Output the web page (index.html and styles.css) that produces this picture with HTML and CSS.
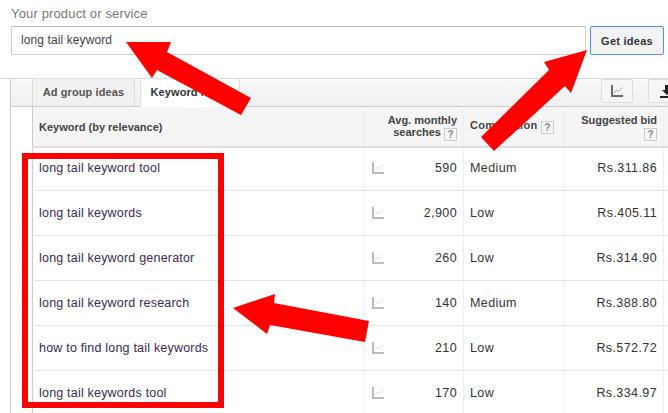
FILE: index.html
```html
<!DOCTYPE html>
<html lang="en">
<head>
    <meta charset="UTF-8">
    <meta name="viewport" content="width=device-width, initial-scale=1.0">
    <title>Keyword ideas</title>
    <link rel="stylesheet" href="styles.css">
</head>
<body>
    <svg width="0" height="0" class="defs">
        <symbol id="trend" viewBox="0 0 12 12">
            <path d="M1 0v11H12" fill="none" stroke="currentColor" stroke-width="2"/>
            <path d="M3 8l2.500-3 2 1.500 3.500-4" fill="none" stroke="currentColor" stroke-width=".9" opacity=".6"/>
        </symbol>
    </svg>

    <div class="search">
        <div class="search-label">Your product or service</div>
        <div class="search-row">
            <div class="search-input">long tail keyword</div>
            <button class="btn-ideas">Get ideas</button>
        </div>
    </div>

    <div class="results">
        <div class="results-body">
            <div class="toolbar">
                <div class="tab">Ad group ideas</div>
                <div class="tab tab-active">Keyword ideas</div>
                <div class="tool tool-chart"><svg width="12" height="12"><use href="#trend"/></svg></div>
                <div class="tool tool-download">
                    <svg width="14" height="13" viewBox="0 0 14 13"><path d="M5 0h4v5h3L7 10 2 5h3zM0 11h14v2H0z" fill="#222"/></svg>
                </div>
            </div>

            <table class="ideas">
                <colgroup>
                    <col class="w-keyword">
                    <col class="w-trend">
                    <col class="w-num">
                    <col class="w-comp">
                    <col class="w-bid">
                    <col>
                </colgroup>
                <thead>
                    <tr>
                        <th class="col-keyword">Keyword (by relevance)</th>
                        <th class="col-searches" colspan="2">Avg. monthly<br>searches <span class="help">?</span></th>
                        <th class="col-comp">Competition <span class="help">?</span></th>
                        <th class="col-bid">Suggested bid<br><span class="help">?</span></th>
                        <th class="col-end"></th>
                    </tr>
                </thead>
                <tbody>
                    <tr>
                        <td class="col-keyword">long tail keyword tool</td>
                        <td class="col-trend"><svg width="12" height="12"><use href="#trend"/></svg></td>
                        <td class="col-num">590</td>
                        <td class="col-comp">Medium</td>
                        <td class="col-bid">Rs.311.86</td>
                        <td class="col-end"></td>
                    </tr>
                    <tr>
                        <td class="col-keyword">long tail keywords</td>
                        <td class="col-trend"><svg width="12" height="12"><use href="#trend"/></svg></td>
                        <td class="col-num">2,900</td>
                        <td class="col-comp">Low</td>
                        <td class="col-bid">Rs.405.11</td>
                        <td class="col-end"></td>
                    </tr>
                    <tr>
                        <td class="col-keyword">long tail keyword generator</td>
                        <td class="col-trend"><svg width="12" height="12"><use href="#trend"/></svg></td>
                        <td class="col-num">260</td>
                        <td class="col-comp">Low</td>
                        <td class="col-bid">Rs.314.90</td>
                        <td class="col-end"></td>
                    </tr>
                    <tr>
                        <td class="col-keyword">long tail keyword research</td>
                        <td class="col-trend"><svg width="12" height="12"><use href="#trend"/></svg></td>
                        <td class="col-num">140</td>
                        <td class="col-comp">Medium</td>
                        <td class="col-bid">Rs.388.80</td>
                        <td class="col-end"></td>
                    </tr>
                    <tr>
                        <td class="col-keyword">how to find long tail keywords</td>
                        <td class="col-trend"><svg width="12" height="12"><use href="#trend"/></svg></td>
                        <td class="col-num">210</td>
                        <td class="col-comp">Low</td>
                        <td class="col-bid">Rs.572.72</td>
                        <td class="col-end"></td>
                    </tr>
                    <tr>
                        <td class="col-keyword">long tail keywords tool</td>
                        <td class="col-trend"><svg width="12" height="12"><use href="#trend"/></svg></td>
                        <td class="col-num">170</td>
                        <td class="col-comp">Low</td>
                        <td class="col-bid">Rs.334.97</td>
                        <td class="col-end"></td>
                    </tr>
                </tbody>
            </table>
        </div>
    </div>

    <!-- red annotations drawn over the screenshot -->
    <svg class="marks" width="668" height="413" viewBox="0 0 668 413">
        <rect x="25" y="156" width="196" height="249" fill="none" stroke="#f00" stroke-width="6"/>
        <polygon fill="#f00" points="126,42 171,42 167,52 251,98 241,115 157,70 152,78"/>
        <polygon fill="#f00" points="587,50 544,62 549,70 481,137 494,151 565,86 571,93"/>
        <polygon fill="#f00" points="233,308 275,294 274,303 369,321 365,342 270,325 267,334"/>
    </svg>
</body>
</html>
```

FILE: styles.css
```css
html, body {
    margin: 0;
    height: 413px;
    overflow: hidden;
}
body {
    position: relative;
    width: 668px;
    background: #fff;
    font-family: "Liberation Sans", Arial, sans-serif;
    font-size: 12px;
    color: #333;
}
.defs {
    display: none;
}
.search {
    padding: 6px 4px 0 11px;
}
.search-label {
    font-size: 13px;
    line-height: 15px;
    letter-spacing: .15px;
    color: #777;
    margin-bottom: 5px;
}
.search-row {
    display: flex;
    gap: 4px;
}
.search-input {
    flex: 1;
    height: 27px;
    line-height: 27px;
    padding-left: 9px;
    border: 1px solid #d0d0d0;
    border-top-color: #b9b9b9;
    letter-spacing: .1px;
    color: #444;
}
.btn-ideas {
    width: 74px;
    height: 29px;
    padding: 0;
    border: 1px solid #4d90fe;
    border-radius: 2px;
    background: #f3f3f3;
    font: bold 11px "Liberation Sans", Arial, sans-serif;
    letter-spacing: .25px;
    color: #333;
}
.results {
    margin-top: 23px;
    padding-left: 10px;
    border-top: 1px solid #ddd;
}
.results-body {
    border-left: 1px solid #ccc;
    overflow: hidden;
    height: 340px;
}
.toolbar {
    display: flex;
    height: 27px;
    padding-left: 21px;
    background: linear-gradient(#f8f8f8, #f0f0f0);
    border-bottom: 1px solid #ccc;
}
.tab {
    flex-shrink: 0;
    width: 101px;
    height: 27px;
    line-height: 27px;
    margin-right: 5px;
    text-align: center;
    border: 1px solid #ddd;
    border-bottom: 0;
    border-top: 0;
    font-size: 11px;
    font-weight: bold;
    letter-spacing: .1px;
    color: #555;
    background: #f1f1f1;
    white-space: nowrap;
}
.tab-active {
    width: 98px;
    height: 28px;
    background: #fff;
    color: #333;
}
.tool {
    flex-shrink: 0;
    display: flex;
    align-items: center;
    justify-content: center;
    box-sizing: border-box;
    width: 32px;
    height: 24px;
    border: 1px solid #ddd;
    border-radius: 2px;
    color: #6a6a6a;
    background: #f6f6f6;
}
.tool-chart {
    margin-left: 356px;
}
.tool-download {
    margin-left: 15px;
    padding-left: 6px;
}
.ideas {
    border-collapse: collapse;
    table-layout: fixed;
    margin-left: 21px;
    width: 636px;
}
.w-keyword { width: 331px; }
.w-trend { width: 40px; }
.w-num { width: 60px; }
.w-comp { width: 100px; }
.w-bid { width: 100px; }
.ideas th {
    height: 39px;
    padding: 0;
    background: #f5f5f5;
    border-bottom: 2px solid #ddd;
    font-size: 11px;
    line-height: 12px;
    color: #444;
    vertical-align: middle;
}
.ideas td {
    height: 44px;
    padding: 0;
    border-bottom: 1px solid #e5e5e5;
    font-size: 12.5px;
    letter-spacing: .4px;
    color: #333;
    vertical-align: top;
    line-height: 44px;
}
.ideas tr:first-child td {
    height: 42px;
    line-height: 40px;
}
.ideas .col-keyword {
    padding-left: 6px;
    text-align: left;
    border-left: 1px solid #ccc;
}
.ideas td.col-keyword {
    letter-spacing: .2px;
    color: #3b2a55;
}
.ideas .col-trend {
    padding-left: 8px;
    border-left: 1px solid #eee;
    color: #bbb;
}
.col-trend svg {
    vertical-align: -2px;
}
.ideas .col-searches {
    height: 37px;
    text-align: right;
    padding-right: 6px;
    padding-top: 2px;
    border-left: 1px solid #eee;
}
.ideas .col-num {
    text-align: right;
    padding-right: 6px;
}
.ideas .col-comp {
    padding-left: 6px;
    text-align: left;
    border-left: 1px solid #eee;
}
.ideas th.col-comp {
    letter-spacing: .3px;
}
.ideas .col-bid {
    padding-right: 6px;
    text-align: right;
    border-left: 1px solid #eee;
}
.ideas th.col-bid {
    height: 37px;
    padding-top: 2px;
}
.col-end {
    border-left: 1px solid #eee;
}
.help {
    display: inline-block;
    width: 11px;
    height: 11px;
    line-height: 11px;
    border: 1px solid #ccc;
    background: #f5f5f5;
    color: #888;
    font-size: 10px;
    text-align: center;
    vertical-align: -2px;
}
.marks {
    position: absolute;
    left: 0;
    top: 0;
    pointer-events: none;
}
```
